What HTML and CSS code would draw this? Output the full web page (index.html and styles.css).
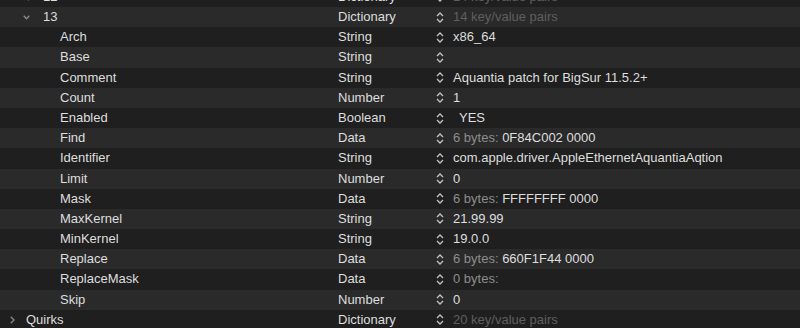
FILE: index.html
```html
<!DOCTYPE html>
<html lang="en">

<head>
    <meta charset="UTF-8">
    <title>Kernel Patch</title>
    <link rel="stylesheet" href="styles.css">
</head>

<body>
    <div class="plist">
        <div class="row">
            <div class="key lvl1"><span class="disc"><svg class="closed" width="5" height="8" viewBox="0 0 5 8"><path d="M0.8 0.8 L4 4 L0.8 7.2"/></svg></span>12</div>
            <div class="type">Dictionary</div>
            <div class="step"><svg width="8" height="11" viewBox="0 0 8 11"><path d="M1 4 L4 1 L7 4 M1 7 L4 10 L7 7"/></svg></div>
            <div class="value dim">14 key/value pairs</div>
        </div>
        <div class="row">
            <div class="key lvl1"><span class="disc"><svg class="open" width="7" height="5" viewBox="0 0 7 5"><path d="M0.7 0.8 L3.5 3.8 L6.3 0.8"/></svg></span>13</div>
            <div class="type">Dictionary</div>
            <div class="step"><svg width="8" height="11" viewBox="0 0 8 11"><path d="M1 4 L4 1 L7 4 M1 7 L4 10 L7 7"/></svg></div>
            <div class="value dim">14 key/value pairs</div>
        </div>
        <div class="row">
            <div class="key lvl2">Arch</div>
            <div class="type">String</div>
            <div class="step"><svg width="8" height="11" viewBox="0 0 8 11"><path d="M1 4 L4 1 L7 4 M1 7 L4 10 L7 7"/></svg></div>
            <div class="value">x86_64</div>
        </div>
        <div class="row">
            <div class="key lvl2">Base</div>
            <div class="type">String</div>
            <div class="step"><svg width="8" height="11" viewBox="0 0 8 11"><path d="M1 4 L4 1 L7 4 M1 7 L4 10 L7 7"/></svg></div>
            <div class="value"></div>
        </div>
        <div class="row">
            <div class="key lvl2">Comment</div>
            <div class="type">String</div>
            <div class="step"><svg width="8" height="11" viewBox="0 0 8 11"><path d="M1 4 L4 1 L7 4 M1 7 L4 10 L7 7"/></svg></div>
            <div class="value">Aquantia patch for BigSur 11.5.2+</div>
        </div>
        <div class="row">
            <div class="key lvl2">Count</div>
            <div class="type">Number</div>
            <div class="step"><svg width="8" height="11" viewBox="0 0 8 11"><path d="M1 4 L4 1 L7 4 M1 7 L4 10 L7 7"/></svg></div>
            <div class="value">1</div>
        </div>
        <div class="row">
            <div class="key lvl2">Enabled</div>
            <div class="type">Boolean</div>
            <div class="step"><svg width="8" height="11" viewBox="0 0 8 11"><path d="M1 4 L4 1 L7 4 M1 7 L4 10 L7 7"/></svg></div>
            <div class="value bool">YES</div>
        </div>
        <div class="row">
            <div class="key lvl2">Find</div>
            <div class="type">Data</div>
            <div class="step"><svg width="8" height="11" viewBox="0 0 8 11"><path d="M1 4 L4 1 L7 4 M1 7 L4 10 L7 7"/></svg></div>
            <div class="value"><span class="bytes">6 bytes:</span> 0F84C002 0000</div>
        </div>
        <div class="row">
            <div class="key lvl2">Identifier</div>
            <div class="type">String</div>
            <div class="step"><svg width="8" height="11" viewBox="0 0 8 11"><path d="M1 4 L4 1 L7 4 M1 7 L4 10 L7 7"/></svg></div>
            <div class="value">com.apple.driver.AppleEthernetAquantiaAqtion</div>
        </div>
        <div class="row">
            <div class="key lvl2">Limit</div>
            <div class="type">Number</div>
            <div class="step"><svg width="8" height="11" viewBox="0 0 8 11"><path d="M1 4 L4 1 L7 4 M1 7 L4 10 L7 7"/></svg></div>
            <div class="value">0</div>
        </div>
        <div class="row">
            <div class="key lvl2">Mask</div>
            <div class="type">Data</div>
            <div class="step"><svg width="8" height="11" viewBox="0 0 8 11"><path d="M1 4 L4 1 L7 4 M1 7 L4 10 L7 7"/></svg></div>
            <div class="value"><span class="bytes">6 bytes:</span> FFFFFFFF 0000</div>
        </div>
        <div class="row">
            <div class="key lvl2">MaxKernel</div>
            <div class="type">String</div>
            <div class="step"><svg width="8" height="11" viewBox="0 0 8 11"><path d="M1 4 L4 1 L7 4 M1 7 L4 10 L7 7"/></svg></div>
            <div class="value">21.99.99</div>
        </div>
        <div class="row">
            <div class="key lvl2">MinKernel</div>
            <div class="type">String</div>
            <div class="step"><svg width="8" height="11" viewBox="0 0 8 11"><path d="M1 4 L4 1 L7 4 M1 7 L4 10 L7 7"/></svg></div>
            <div class="value">19.0.0</div>
        </div>
        <div class="row">
            <div class="key lvl2">Replace</div>
            <div class="type">Data</div>
            <div class="step"><svg width="8" height="11" viewBox="0 0 8 11"><path d="M1 4 L4 1 L7 4 M1 7 L4 10 L7 7"/></svg></div>
            <div class="value"><span class="bytes">6 bytes:</span> 660F1F44 0000</div>
        </div>
        <div class="row">
            <div class="key lvl2">ReplaceMask</div>
            <div class="type">Data</div>
            <div class="step"><svg width="8" height="11" viewBox="0 0 8 11"><path d="M1 4 L4 1 L7 4 M1 7 L4 10 L7 7"/></svg></div>
            <div class="value"><span class="bytes">0 bytes:</span></div>
        </div>
        <div class="row">
            <div class="key lvl2">Skip</div>
            <div class="type">Number</div>
            <div class="step"><svg width="8" height="11" viewBox="0 0 8 11"><path d="M1 4 L4 1 L7 4 M1 7 L4 10 L7 7"/></svg></div>
            <div class="value">0</div>
        </div>
        <div class="row">
            <div class="key lvl0"><span class="disc"><svg class="closed" width="5" height="8" viewBox="0 0 5 8"><path d="M0.8 0.8 L4 4 L0.8 7.2"/></svg></span>Quirks</div>
            <div class="type">Dictionary</div>
            <div class="step"><svg width="8" height="11" viewBox="0 0 8 11"><path d="M1 4 L4 1 L7 4 M1 7 L4 10 L7 7"/></svg></div>
            <div class="value dim">20 key/value pairs</div>
        </div>
    </div>
</body>

</html>
```

FILE: styles.css
```css
body {
    margin: 0;
    height: 328px;
    overflow: hidden;
    background-color: #1f1f1f;
    font-family: "Liberation Sans", Arial, sans-serif;
    font-size: 13px;
    color: #dedede;
}

.plist {
    margin-top: -13.2px;
}

.row {
    display: grid;
    grid-template-columns: 338px 98px 17px 1fr;
    height: 20.2px;
    line-height: 20.2px;
    align-items: center;
    background-color: #1f1f1f;
    white-space: nowrap;
}

.row:nth-child(even) {
    background-color: #2a2a2a;
}

.key {
    display: flex;
    align-items: center;
}

.lvl0 {
    padding-left: 9px;
}

.lvl1 {
    padding-left: 26px;
}

.lvl2 {
    padding-left: 60px;
}

.disc {
    display: inline-flex;
    align-items: center;
    width: 17px;
}

.disc svg {
    fill: none;
    stroke: #8a8a8a;
    stroke-width: 1.3;
}

.disc .closed {
    margin-left: 1px;
}

.disc .open {
    margin-left: -3px;
}

.step {
    display: flex;
    align-items: center;
}

.step svg {
    fill: none;
    stroke: #c4c4c4;
    stroke-width: 1.3;
}

.value.dim {
    color: #5f5f5f;
}

.value.bool {
    padding-left: 6px;
}

.bytes {
    color: #8d8d8d;
}
```
